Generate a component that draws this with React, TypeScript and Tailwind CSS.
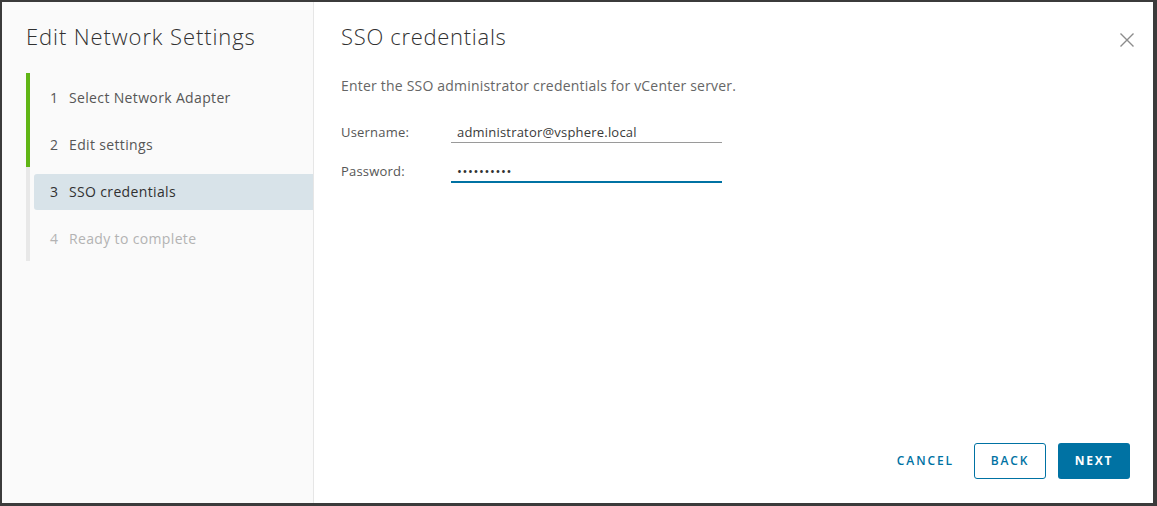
import * as React from "react"

const steps = [
  { n: 1, label: "Select Network Adapter", state: "done" },
  { n: 2, label: "Edit settings", state: "done" },
  { n: 3, label: "SSO credentials", state: "current" },
  { n: 4, label: "Ready to complete", state: "todo" },
]

export default function App() {
  const [user, setUser] = React.useState("administrator@vsphere.local")
  const [pass, setPass] = React.useState("••••••••••")

  return (
    <div className="w-[1157px] h-[506px] bg-[#3b3b3b] pt-[2px] pl-[2px] pr-[4px] pb-[3px] font-['Open_Sans',sans-serif]">
      <div className="flex h-full bg-white">
        {/* wizard steps */}
        <aside className="w-[312px] h-full bg-[#fafafa] border-r border-[#e6e6e6] pt-[20px]">
          <h2 className="pl-[24px] text-[22px] leading-[28px] font-light text-[#313131] tracking-[0.9px]">
            Edit Network Settings
          </h2>
          <div className="mt-[23px] ml-[24px]">
            {steps.map((s) => (
              <div
                key={s.n}
                className={
                  "h-[47px] pt-[7px] border-l-4 " +
                  (s.state === "done" ? "border-[#60b515]" : "border-[#e8e8e8]")
                }
              >
                <div
                  className={
                    "ml-[4px] h-[36px] flex items-center pl-[16px] pb-[1px] text-[14px] tracking-[0.35px] rounded-l-[3px] " +
                    (s.state === "current"
                      ? "bg-[#d8e3e9] text-[#313131]"
                      : s.state === "todo"
                      ? "text-[#b3b3b3]"
                      : "text-[#565656]")
                  }
                >
                  <span className="w-[19px]">{s.n}</span>
                  <span>{s.label}</span>
                </div>
              </div>
            ))}
          </div>
        </aside>

        {/* page content */}
        <main className="flex-1 flex flex-col pl-[27px] pr-[23px] pt-[20px] pb-[24px]">
          <div className="flex items-start justify-between">
            <h3 className="text-[22px] leading-[28px] font-light text-[#313131] tracking-[0.7px]">SSO credentials</h3>
            <button className="mt-[10px] mr-[-5px] text-[#8c8c8c]" aria-label="Close">
              <svg width="16" height="16" viewBox="0 0 16 16" fill="none" stroke="currentColor" strokeWidth="1.4">
                <path d="M1.5 1.5 L14.5 14.5 M14.5 1.5 L1.5 14.5" />
              </svg>
            </button>
          </div>

          <p className="mt-[25px] text-[14px] tracking-[0.2px] text-[#666666]">
            Enter the SSO administrator credentials for vCenter server.
          </p>

          <div className="mt-[26px] flex flex-col gap-[18px]">
            <label className="flex items-end">
              <span className="w-[110px] text-[13px] tracking-[0.2px] text-[#565656] leading-[20px] pb-[1px]">Username:</span>
              <input
                value={user}
                onChange={(e) => setUser(e.target.value)}
                className="w-[271px] h-[21px] px-[6px] text-[13px] tracking-[0.2px] text-[#3a3a3a] bg-transparent border-b border-[#9a9a9a] outline-none"
              />
            </label>
            <label className="flex items-end">
              <span className="w-[110px] text-[13px] tracking-[0.2px] text-[#565656] leading-[20px] pb-[2px]">Password:</span>
              <input
                value={pass}
                onChange={(e) => setPass(e.target.value)}
                className="w-[271px] h-[22px] px-[6px] text-[13px] tracking-[0.6px] text-[#313131] bg-transparent border-b-2 border-[#0072a3] outline-none"
              />
            </label>
          </div>

          <div className="mt-auto flex justify-end items-center gap-[12px]">
            <button className="h-[36px] px-[8px] mr-0 text-[12px] font-semibold tracking-[1.9px] text-[#0072a3]">
              CANCEL
            </button>
            <button className="h-[36px] w-[72px] rounded-[3px] border border-[#0072a3] text-[12px] font-semibold tracking-[1.9px] text-[#0072a3]">
              BACK
            </button>
            <button className="h-[36px] w-[72px] rounded-[3px] bg-[#0072a3] text-[12px] font-bold tracking-[1.8px] text-white">
              NEXT
            </button>
          </div>
        </main>
      </div>
    </div>
  )
}
